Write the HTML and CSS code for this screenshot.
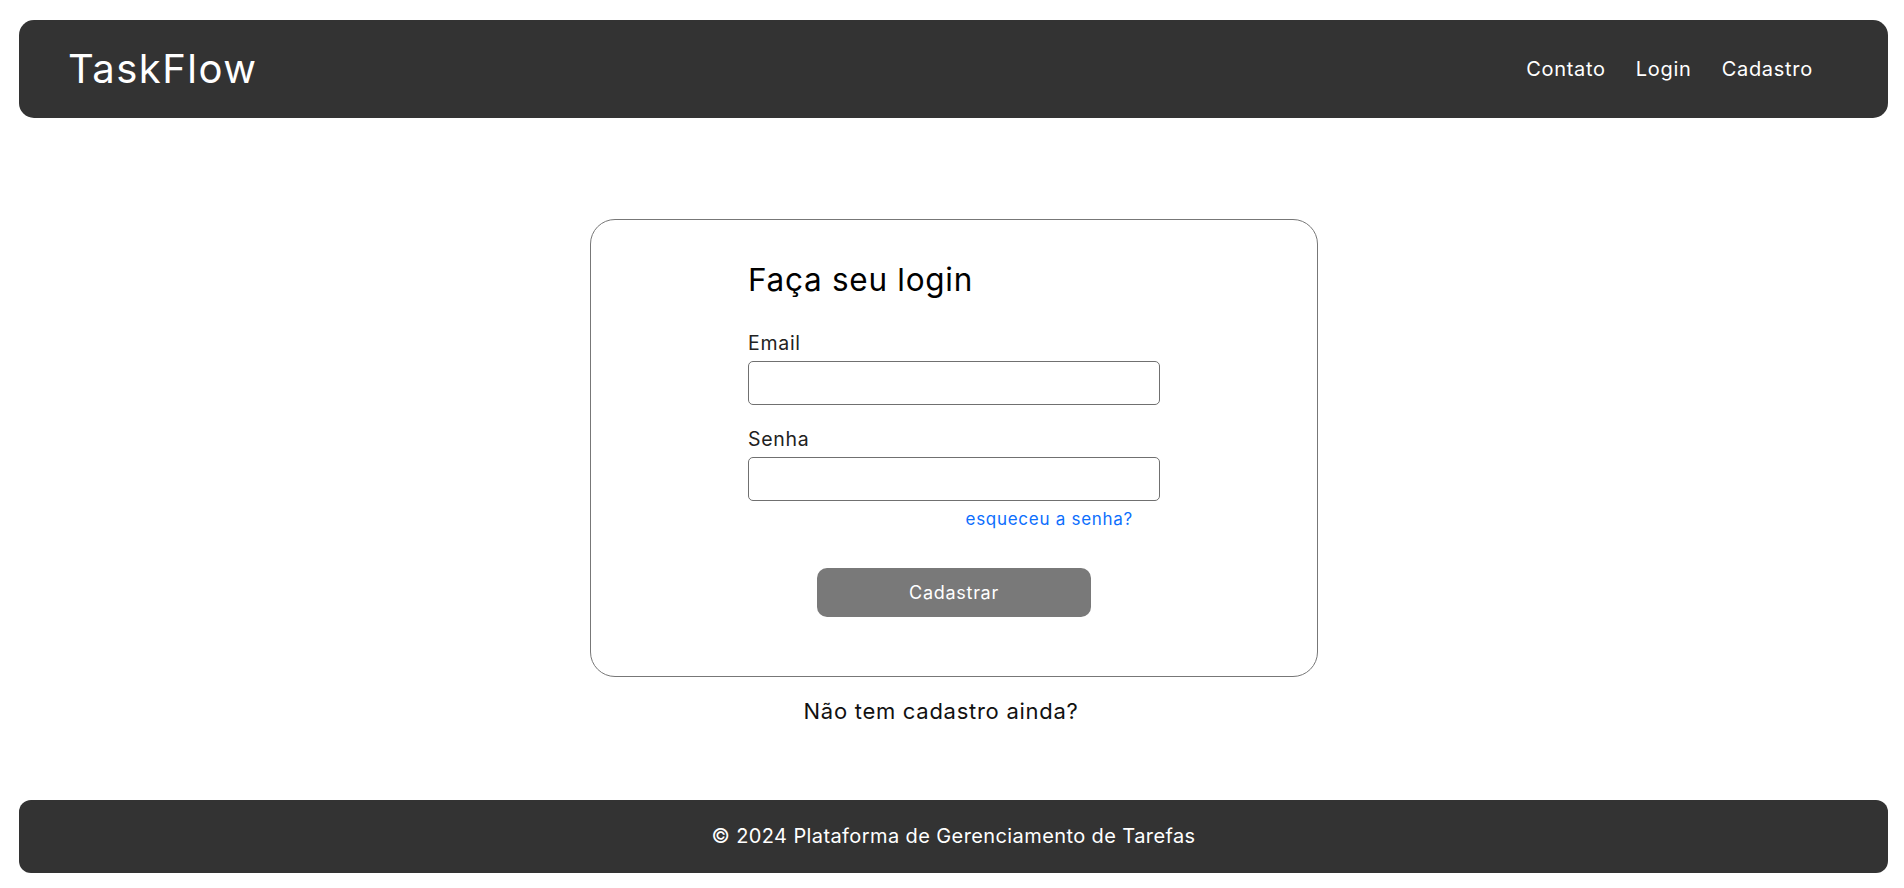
FILE: index.html
```html
<!DOCTYPE html>
<html lang="pt-BR">
<head>
<meta charset="utf-8">
<title>TaskFlow - Login</title>
<link rel="stylesheet" href="styles.css">
</head>
<body>
<header class="topbar">
  <div class="brand">TaskFlow</div>
  <nav class="nav">
    <a class="nav-link" href="#">Contato</a>
    <a class="nav-link" href="#">Login</a>
    <a class="nav-link" href="#">Cadastro</a>
  </nav>
</header>
<main class="main">
  <section class="card">
    <form class="form">
      <h2 class="title">Faça seu login</h2>
      <label class="label" for="email">Email</label>
      <input class="input" id="email" type="email">
      <label class="label label-second" for="senha">Senha</label>
      <input class="input" id="senha" type="password">
      <div class="forgot-row"><a class="forgot" href="#">esqueceu a senha?</a></div>
      <div class="btn-row"><button class="btn" type="button">Cadastrar</button></div>
    </form>
  </section>
  <p class="signup">Não tem cadastro ainda?</p>
</main>
<footer class="footer">© 2024 Plataforma de Gerenciamento de Tarefas</footer>
</body>
</html>
```
FILE: styles.css
```css
* { box-sizing: border-box; }
html, body { margin: 0; padding: 0; background: #fff; }
body {
  font-family: Inter, "Noto Sans", sans-serif;
  color: #111;
  letter-spacing: 0.72px;
}
.topbar {
  margin: 20px 16px 0 19px;
  height: 98px;
  background: #333333;
  border-radius: 15px;
  display: flex;
  align-items: center;
  justify-content: space-between;
  padding: 0 75px 0 49px;
}
.brand {
  color: #fff;
  font-size: 40px;
  line-height: 48px;
  letter-spacing: 1.45px;
}
.nav { display: flex; gap: 30px; }
.nav-link {
  color: #fff;
  text-decoration: none;
  font-size: 20px;
  line-height: 24px;
}
.main { padding: 101px 0 0 4px; }
.card {
  width: 728px;
  height: 458px;
  margin: 0 auto;
  border: 1px solid #777;
  border-radius: 25px;
  padding: 42px 0 0;
}
.form {
  width: 412px;
  margin: 0 auto;
  display: flex;
  flex-direction: column;
}
.title {
  margin: 0 0 34px;
  font-size: 31.5px;
  line-height: 36px;
  font-weight: 400;
  color: #000;
}
.label {
  font-size: 19.5px;
  line-height: 22px;
  color: #222;
  margin-bottom: 7px;
}
.label-second { margin-top: 23px; }
.input {
  height: 44px;
  border: 1px solid #707070;
  border-radius: 5px;
  font-size: 16px;
  padding: 0 10px;
}
.forgot-row {
  margin-top: 8px;
  text-align: right;
  padding-right: 27px;
  line-height: 20px;
}
.forgot {
  color: #0d6efd;
  text-decoration: none;
  font-size: 17px;
}
.btn-row {
  margin-top: 39px;
  display: flex;
  justify-content: center;
}
.btn {
  width: 274px;
  height: 49px;
  border: none;
  border-radius: 10px;
  background: #797979;
  color: #fff;
  font-family: inherit;
  letter-spacing: inherit;
  font-size: 18px;
}
.signup {
  margin: 21px 0 0;
  text-align: center;
  padding-right: 26px;
  font-size: 22px;
  line-height: 26px;
  color: #111;
}
.footer {
  margin: 76px 16px 0 19px;
  height: 73px;
  line-height: 73px;
  background: #333333;
  border-radius: 12px;
  color: #fff;
  text-align: center;
  font-size: 20px;
  letter-spacing: 0.4px;
}
```
